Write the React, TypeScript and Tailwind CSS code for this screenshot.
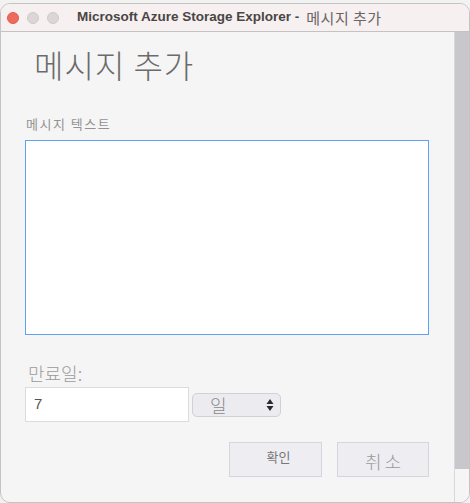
import React from "react";

const kr = { fontFamily: '"Noto Sans CJK KR", "Noto Sans", sans-serif' };

export default function App() {
  return (
    <div className="w-[470px] h-[503px] bg-[#f2f2f2] overflow-hidden pt-[3px]">
      <div className="w-[470px] h-[500px] flex flex-col bg-[#f5f5f5] border border-[#c4c4c4] rounded-[10px] overflow-hidden">
        {/* title bar */}
        <div className="h-[28px] shrink-0 bg-[#f7f0f0] border-b border-[#c3c3c3] flex items-center pl-[6px]">
          <div className="flex gap-[8px]">
            <div className="w-[12px] h-[12px] rounded-full bg-[#ee6a5f] border border-[#e05a50]" />
            <div className="w-[12px] h-[12px] rounded-full bg-[#dcd6d6] border border-[#cfc9c9]" />
            <div className="w-[12px] h-[12px] rounded-full bg-[#dcd6d6] border border-[#cfc9c9]" />
          </div>
          <div className="ml-[18px] flex items-center whitespace-nowrap">
            <span
              className="text-[13.5px] font-bold text-[#4a4545]"
              style={{ fontFamily: '"Liberation Sans", Arial, sans-serif' }}
            >
              Microsoft Azure Storage Explorer -
            </span>
            <span className="ml-[7px] text-[15px] text-[#6a6565] leading-none tracking-[0.5px]" style={kr}>
              메시지 추가
            </span>
          </div>
        </div>
        {/* body */}
        <div className="flex-1 flex min-h-0">
          <div className="flex-1 flex flex-col pl-[24px] pr-[25px]" style={kr}>
            <div className="mt-[15px] pl-[9px] h-[34px] leading-[34px] text-[32px] font-light text-[#6b6b6b] tracking-[1px]">
              메시지 추가
            </div>
            <div className="mt-[35px] pl-[1px] h-[16px] leading-[16px] text-[13px] text-[#939393] tracking-[1.5px]">
              메시지 텍스트
            </div>
            <div className="mt-[8px] h-[195px] bg-white border border-[#5ea2f6]" />
            <div className="mt-[27px] pl-[3px] h-[22px] leading-[22px] text-[18px] font-light text-[#9a9a9a]">
              만료일:
            </div>
            <div className="mt-[3px] flex items-center">
              <div className="w-[164px] h-[35px] bg-white border border-[#dcdce0] flex items-center pl-[8px]">
                <span
                  className="text-[15px] text-[#555]"
                  style={{ fontFamily: '"Liberation Sans", Arial, sans-serif' }}
                >
                  7
                </span>
              </div>
              <div className="ml-[3px] w-[89px] h-[24px] rounded-[5px] bg-[#ececf0] border border-[#d0d0d6] flex items-center justify-between pl-[17px] pr-[6px]">
                <span className="text-[18px] leading-[22px] font-light text-[#8a8a8a]">일</span>
                <svg width="8" height="14" viewBox="0 0 8 14">
                  <path d="M4 1 L7.5 6 L0.5 6 Z" fill="#2a2a2a" />
                  <path d="M4 13 L7.5 8 L0.5 8 Z" fill="#2a2a2a" />
                </svg>
              </div>
            </div>
            <div className="mt-[20px] flex justify-end gap-[15px]">
              <div className="w-[93px] h-[35px] bg-[#eeedf2] border border-[#d6d5dd] flex justify-center pt-[5px]">
                <span className="text-[13px] leading-[18px] text-[#777] pl-[6px]">확인</span>
              </div>
              <div className="w-[92px] h-[35px] bg-[#eeedf2] border border-[#d6d5dd] flex justify-center items-end pb-[3px]">
                <span className="text-[18px] leading-[24px] font-light text-[#999] tracking-[3px] pl-[3px]">취소</span>
              </div>
            </div>
          </div>
          {/* scrollbar */}
          <div className="w-[15px] shrink-0 border-l border-[#d8d8dc] flex flex-col">
            <div className="h-[437px] bg-[#c8c8cc]" />
            <div className="flex-1 bg-[#f5f5f5]" />
          </div>
        </div>
      </div>
    </div>
  );
}
